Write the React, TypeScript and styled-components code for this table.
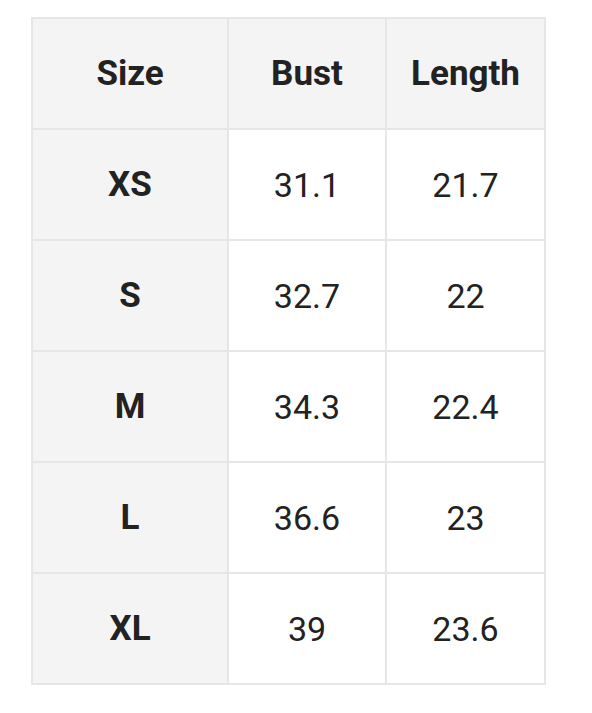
import React from "react"
import styled, { createGlobalStyle } from "styled-components"

const GlobalStyle = createGlobalStyle`
  html, body {
    margin: 0;
    padding: 0;
    background: #ffffff;
  }
  body {
    font-family: Roboto, "Liberation Sans", sans-serif;
  }
`

const rows = [
  { size: "XS", bust: "31.1", length: "21.7" },
  { size: "S", bust: "32.7", length: "22" },
  { size: "M", bust: "34.3", length: "22.4" },
  { size: "L", bust: "36.6", length: "23" },
  { size: "XL", bust: "39", length: "23.6" },
]

export default function App() {
  return (
    <>
      <GlobalStyle />
      <Page>
        <Table>
          <colgroup>
            <col style={{ width: 196 }} />
            <col style={{ width: 158 }} />
            <col style={{ width: 159 }} />
          </colgroup>
          <thead>
            <tr>
              <Head>Size</Head>
              <Head>Bust</Head>
              <Head>Length</Head>
            </tr>
          </thead>
          <tbody>
            {rows.map((r) => (
              <tr key={r.size}>
                <Cell $label>{r.size}</Cell>
                <Cell>{r.bust}</Cell>
                <Cell>{r.length}</Cell>
              </tr>
            ))}
          </tbody>
        </Table>
      </Page>
    </>
  )
}

const Page = styled.div`
  padding: 17px 0 0 31px;
`
const Table = styled.table`
  border-collapse: collapse;
  table-layout: fixed;
  width: 514px;
  border: 2px solid #e6e6e6;
`
const Head = styled.th`
  height: 109px;
  padding: 0;
  border: 2px solid #e6e6e6;
  background: #f4f4f4;
  color: #222222;
  font-size: 35px;
  font-weight: 700;
  text-align: center;
  vertical-align: middle;
`
const Cell = styled.td<{ $label?: boolean }>`
  height: 109px;
  padding: 0;
  border: 2px solid #e6e6e6;
  background: ${(p) => (p.$label ? "#f4f4f4" : "#ffffff")};
  color: #222222;
  font-size: ${(p) => (p.$label ? "35px" : "34px")};
  font-weight: ${(p) => (p.$label ? 700 : 400)};
  text-align: center;
  vertical-align: middle;
`
